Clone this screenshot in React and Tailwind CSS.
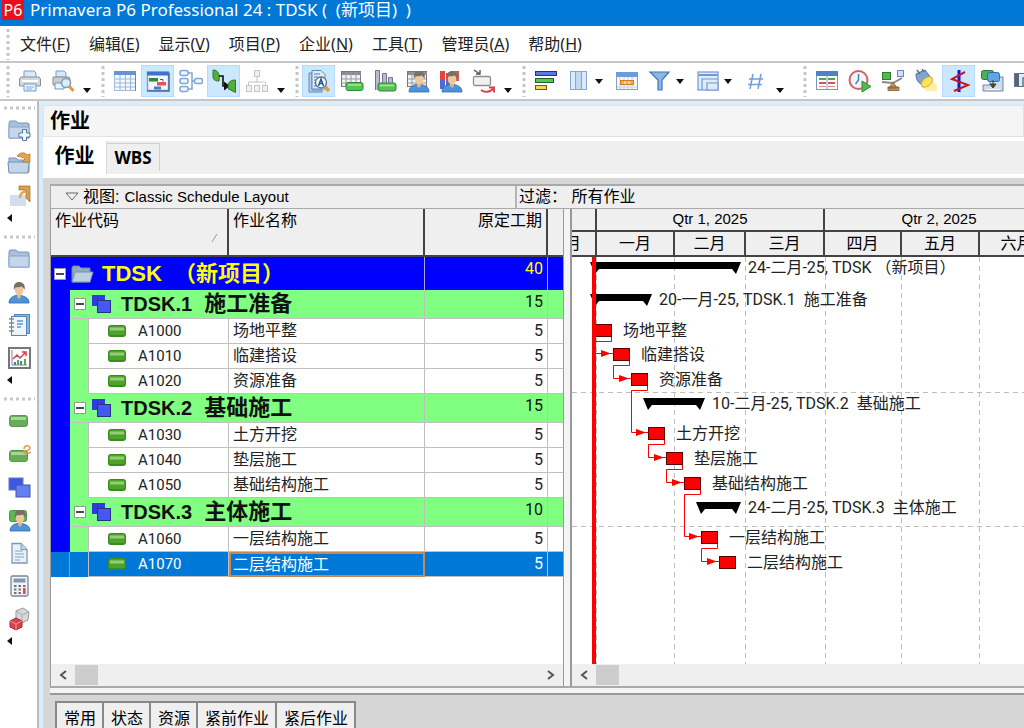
import React, { useState } from 'react';

const MENUS = [
  ['文件', 'F'],
  ['编辑', 'E'],
  ['显示', 'V'],
  ['项目', 'P'],
  ['企业', 'N'],
  ['工具', 'T'],
  ['管理员', 'A'],
  ['帮助', 'H']
];

const WBS_ROWS = [
  {
    code: 'TDSK.1',
    name: '施工准备',
    duration: 15,
    activities: [
      { id: 'A1000', name: '场地平整', duration: 5 },
      { id: 'A1010', name: '临建搭设', duration: 5 },
      { id: 'A1020', name: '资源准备', duration: 5 }
    ]
  },
  {
    code: 'TDSK.2',
    name: '基础施工',
    duration: 15,
    activities: [
      { id: 'A1030', name: '土方开挖', duration: 5 },
      { id: 'A1040', name: '垫层施工', duration: 5 },
      { id: 'A1050', name: '基础结构施工', duration: 5 }
    ]
  },
  {
    code: 'TDSK.3',
    name: '主体施工',
    duration: 10,
    activities: [
      { id: 'A1060', name: '一层结构施工', duration: 5 },
      { id: 'A1070', name: '二层结构施工', duration: 5 }
    ]
  }
];

// Gantt coordinates are measured from the top left of the chart canvas
const SUMMARY_BARS = [
  { x: 18, end: 169, y: 5, label: '24-二月-25, TDSK （新项目）' },
  { x: 18, end: 80, y: 37, label: '20-一月-25, TDSK.1  施工准备' },
  { x: 71, end: 133, y: 141, label: '10-二月-25, TDSK.2  基础施工' },
  { x: 124, end: 169, y: 245, label: '24-二月-25, TDSK.3  主体施工' }
];

const TASK_BARS = [
  { x: 23, y: 67, label: '场地平整' },
  { x: 41, y: 91, label: '临建搭设' },
  { x: 59, y: 116, label: '资源准备' },
  { x: 76, y: 170, label: '土方开挖' },
  { x: 94, y: 195, label: '垫层施工' },
  { x: 112, y: 220, label: '基础结构施工' },
  { x: 129, y: 274, label: '一层结构施工' },
  { x: 147, y: 299, label: '二层结构施工' }
];

const GRID_X = [24, 102, 173, 253, 329, 407, 485];

/* ---------- icons ---------- */

const Icon = ({ children, className = 'h-6 w-6' }) => (
  <svg viewBox="0 0 24 24" className={className} aria-hidden="true">{children}</svg>
);

const Printer = () => (
  <>
    <path d="M6 2h10l2 2v5H6z" fill="#d7e8f8" stroke="#7a9cc4" />
    <path d="M3 8h18l1.500 2v7h-21v-7z" fill="#d5d7da" stroke="#8b9096" />
    <path d="M4 12h16" stroke="#fff" strokeWidth="2" />
    <path d="M6 15h12v7H6z" fill="#eaf4fd" stroke="#6d9bc8" />
    <path d="M8 18h8M8 20h6" stroke="#7fb0dc" />
  </>
);
const PrintPreview = () => (
  <>
    <path d="M5 2h8l2 2v4H5z" fill="#d7e8f8" stroke="#7a9cc4" />
    <path d="M2 8h16l1 2v6H2z" fill="#c9ccd0" stroke="#8b9096" />
    <path d="M4 14h9v6H4z" fill="#eaf4fd" stroke="#6d9bc8" />
    <path d="M18.500 17.500l4 4.500" stroke="#dc9c4a" strokeWidth="3" />
    <circle cx="15" cy="14" r="4.500" fill="#d9edfb" stroke="#8d99a8" strokeWidth="1.500" />
  </>
);
const GridTable = () => (
  <>
    <rect x="1.500" y="2.500" width="21" height="19" fill="#f4f9fe" stroke="#a5bddb" />
    <rect x="1" y="2" width="22" height="4" fill="#6a93d4" />
    <path d="M2 10h20M2 14h20M2 18h20M7 6v15M12.500 6v15M17.500 6v15" stroke="#9eb6d6" />
    <path d="M22.500 4v18" stroke="#6b87b0" />
  </>
);
const GanttIcon = () => (
  <>
    <rect x="1.500" y="3.500" width="21" height="18" fill="#f2f7fd" stroke="#7f9fcd" strokeWidth="1.500" />
    <path d="M1 22h22V4" fill="none" stroke="#4a6d9c" strokeWidth="1.500" />
    <rect x="1" y="2.500" width="22" height="4" fill="#3f74c8" />
    <rect x="3" y="9" width="9" height="3.500" fill="#2f8a35" />
    <rect x="11" y="13" width="9" height="3.500" fill="#e85252" />
    <rect x="8" y="17.500" width="7" height="3" fill="#5272dc" />
    <path d="M14 10.500h3v2" fill="none" stroke="#555" />
  </>
);
const Network = () => (
  <g fill="#eff6fd" stroke="#7ea6d6" strokeWidth="1.500">
    <path d="M9 4h4v16H9M13 12h3" fill="none" />
    <rect x="1" y="1.500" width="8" height="5" rx="2" />
    <rect x="1" y="9.500" width="8" height="5" rx="2" />
    <rect x="1" y="17.500" width="8" height="5" rx="2" />
    <rect x="15.500" y="9.500" width="8" height="5" rx="2" />
  </g>
);
const Trace = () => (
  <>
    <path d="M1 1c5 0 7 4 6 11-3 0-6-1-6-4z" fill="#55ad3d" stroke="#2c7a22" />
    <path d="M7 7h4v10h5" fill="none" stroke="#111" strokeWidth="1.600" />
    <path d="M12 12.500l6 4.500-6 4.500z" fill="#111" />
    <path d="M23.500 11c-7 0-8 4-7 9l7 3.500z" fill="#55ad3d" stroke="#2c7a22" />
  </>
);
const OrgChart = () => (
  <g fill="#f0f0f0" stroke="#c5c5c5">
    <path d="M12 8v6M3.500 16v-3h17v3" fill="none" />
    <rect x="9.500" y="1.500" width="5" height="6" />
    <rect x="1.500" y="16.500" width="5" height="6" />
    <rect x="9.500" y="16.500" width="5" height="6" />
    <rect x="17.500" y="16.500" width="5" height="6" />
  </g>
);
const FindDoc = () => (
  <>
    <path d="M2 4h3v17h10v2H2z" fill="#b7d0ea" stroke="#5f88b8" />
    <path d="M5 1.500h9l4 4V20H5z" fill="#dcebf9" stroke="#5f88b8" />
    <path d="M7 5h6M7 8h4M7 11h2M7 14h2M7 17h3" stroke="#4f7fba" />
    <path d="M18.500 18l3.500 4" stroke="#dfa048" strokeWidth="3.500" />
    <circle cx="14" cy="13.500" r="5.500" fill="#f4faff" stroke="#66707c" strokeWidth="1.300" />
    <path d="M11.500 17l2.500-7 2.500 7M12.300 14.500h3.400" fill="none" stroke="#23568f" strokeWidth="1.500" />
  </>
);
const TableBar = () => (
  <>
    <rect x="1.500" y="2.500" width="19" height="15" fill="#f1f1f4" stroke="#77777f" />
    <path d="M2 3h19v3H2z" fill="#8d8d99" />
    <path d="M2 10h18M2 14h18M6 3v15M11 3v15M16 3v15" stroke="#9a9aa4" />
    <rect x="6" y="13.500" width="17" height="8" rx="2" fill="#59c257" stroke="#2c8a33" />
    <path d="M8 16h13" stroke="#a5eb9c" strokeWidth="1.500" />
  </>
);
const HistogramBar = () => (
  <>
    <path d="M2.500 21V1.500h4V21M9.500 18V4.500h4V18M15.500 15V8.500h4V15" fill="#b8bbd8" stroke="#73758e" />
    <rect x="5" y="14" width="18" height="8" rx="2" fill="#59c257" stroke="#2c8a33" />
    <path d="M7 16.500h14" stroke="#a5eb9c" strokeWidth="1.500" />
  </>
);
const Person = () => (
  <>
    <path d="M3 23c0-5 4-7 7-7.500h5c5 1 8 3 8 7.500z" fill="#4c93d9" stroke="#2f6cab" strokeWidth=".8" />
    <path d="M11 14h4v3l-2 2-2-2z" fill="#e2b184" />
    <ellipse cx="13" cy="10" rx="4.200" ry="5.500" fill="#edc79e" />
    <path d="M8 10c-1-6 2-8 5-8s7 2 5.500 8c-1-2-2-3-3-3.500-2 1-5 .5-6 1z" fill="#77706a" />
  </>
);
const TablePerson = () => (
  <>
    <rect x="1.500" y="2.500" width="19" height="15" fill="#f1f1f4" stroke="#77777f" />
    <path d="M2 3h19v3H2z" fill="#8d8d99" />
    <path d="M2 10h18M2 14h18M6 3v15M11 3v15" stroke="#9a9aa4" />
    <Person />
  </>
);
const BarsPerson = () => (
  <>
    <path d="M1 2h5v9H1zM7 4h4v8H7z" fill="#e34545" />
    <path d="M1 11h5v9H1zM7 12h4v6H7z" fill="#4e6ad8" />
    <path d="M14 2h6v10h-6z" fill="#d95858" />
    <Person />
  </>
);
const TraceBox = () => (
  <>
    <path d="M2 1l6 4M8 1v4H4" fill="none" stroke="#555" strokeWidth="1.400" />
    <rect x="1.500" y="7.500" width="17" height="9" rx="1.500" fill="#f2f2f2" stroke="#8f8f8f" strokeWidth="1.300" />
    <path d="M9 21c4 3 9 2 12-1M17 18.500h5v5" fill="none" stroke="#dc3945" strokeWidth="1.800" />
  </>
);
const Bars = () => (
  <g strokeWidth="1">
    <rect x="1.500" y="2.500" width="21" height="4" fill="#5a79e6" stroke="#29356e" />
    <rect x="1.500" y="9.500" width="18" height="4" fill="#54c65a" stroke="#1e6427" />
    <rect x="1.500" y="16.500" width="11" height="4" fill="#f0da5d" stroke="#6b5b1b" />
  </g>
);
const Columns = () => (
  <g fill="#dbe9f8" stroke="#83a7d6">
    <rect x="3.500" y="2.500" width="5" height="18" />
    <rect x="8.500" y="2.500" width="6" height="18" fill="#c3d9f1" />
    <rect x="14.500" y="2.500" width="5" height="18" />
  </g>
);
const Timescale = () => (
  <>
    <rect x="1.500" y="3.500" width="21" height="17" fill="#f4f7fb" stroke="#8aa0c0" />
    <rect x="1" y="3" width="22" height="5" fill="#6f9ae0" />
    <path d="M5 8v12M9 8v12M13 8v12M17 8v12M2 18h20" stroke="#c6d2e3" />
    <rect x="5.500" y="11.500" width="13" height="4" fill="#f2ac4c" stroke="#cd7d22" />
    <path d="M10 12v3M14 12v3" stroke="#fff" />
  </>
);
const Funnel = () => (
  <path d="M2 3h19l-7 8v10h-4V11z" fill="#8db7e2" stroke="#3f77b5" strokeWidth="1.200" />
);
const GroupBy = () => (
  <g fill="#dfebf9" stroke="#6f9ad2" strokeWidth="1.200">
    <rect x="2" y="3" width="20" height="18" />
    <path d="M2.500 6h19" strokeWidth="2" />
    <path d="M6 21V10h16M11 21v-7h11v7z" />
  </g>
);
const Hash = () => (
  <path d="M9 5L6 20M17 5l-3 15M5 10h14M4 15.500h14" stroke="#6d9ede" strokeWidth="1.500" fill="none" />
);
const Sheet = () => (
  <>
    <rect x="1.500" y="2.500" width="21" height="18" fill="#fafcff" stroke="#7c97c0" />
    <rect x="1" y="2" width="22" height="5" fill="#547fc6" />
    <path d="M4 10h7M13 10h7" stroke="#4aa84b" strokeWidth="2" />
    <path d="M4 14h7M13 14h7" stroke="#e25454" strokeWidth="2" />
    <path d="M4 17.500h7M13 17.500h7" stroke="#dd8888" />
    <path d="M12 7v13" stroke="#8aa2c6" />
  </>
);
const ClockRun = () => (
  <>
    <circle cx="10.500" cy="11" r="9" fill="#eef5fc" stroke="#d36161" strokeWidth="2" />
    <path d="M10.500 5v6l-3 4" fill="none" stroke="#5480b0" strokeWidth="1.500" />
    <path d="M14 12l9 5.500-9 5.500z" fill="#52bd4c" stroke="#2f8a33" />
  </>
);
const Balance = () => (
  <>
    <rect x="1.500" y="3.500" width="8" height="7" fill="#54b84d" stroke="#2c7d2f" />
    <rect x="16.500" y="1.500" width="6" height="6" fill="#cde2f7" stroke="#5c8cc5" />
    <path d="M1 13l11 1 9-5" stroke="#888" fill="none" strokeWidth="1.800" />
    <path d="M12 13l4 6H8zM7 18h11v3.500H7z" fill="#c2935a" stroke="#7c5930" strokeWidth=".8" />
  </>
);
const Spotlight = () => (
  <>
    <path d="M16 9l7 7v6l-10 .5-6-5z" fill="#fdf2a4" />
    <path d="M2 5l9-4 6 8-7 7c-6-1-8-6-8-11z" fill="#86a4cd" stroke="#50709e" />
    <path d="M3 1l3 4M8 0l2 3" stroke="#50709e" strokeWidth="1.500" />
    <ellipse cx="13" cy="13" rx="6.500" ry="4" transform="rotate(-40 13 13)" fill="#fbe557" stroke="#c9b14e" />
  </>
);
const ProgressLine = () => (
  <>
    <path d="M12 1v22" stroke="#1414dc" strokeWidth="3" />
    <path d="M18 3L5 10l16 6-14 6" fill="none" stroke="#c41822" strokeWidth="2" />
  </>
);
const Messages = () => (
  <>
    <path d="M10 8h13v14H3v-6h7z" fill="#d0dceb" stroke="#6b86a8" />
    <rect x="1.500" y="1.500" width="12" height="9" rx="2" fill="#4faf58" stroke="#2b7a3a" />
    <rect x="7.500" y="3.500" width="12" height="9" rx="2" fill="#5fa5df" stroke="#2f6da5" />
    <path d="M13 11v6M10 15l3 4 3-4z" stroke="#4c3e30" fill="#4c3e30" />
    <path d="M6 20.500h14" stroke="#fff" />
  </>
);
const Panels = () => (
  <>
    <rect x="1.500" y="4.500" width="20" height="13" fill="#dfeaf7" stroke="#62748c" />
    <path d="M2 5h4v12H2z" fill="#5a6577" />
    <path d="M10 17V9h11" fill="none" stroke="#62748c" strokeWidth="1.500" />
  </>
);

const Folder = () => (
  <>
    <path d="M2 20V5l1-2h6l2 2h10l1 1v14z" fill="#a9c1dc" stroke="#7492b6" />
    <path d="M2 20V9h20v11z" fill="#c3d6ec" stroke="#89a5c7" />
  </>
);
const FolderAdd = () => (
  <>
    <Folder />
    <path d="M15.500 11.500h4v3.500h3.500v4h-3.500v3.500h-4V19H12v-4h3.500z" fill="#f4f8fc" stroke="#54779f" />
  </>
);
const FolderOpen = () => (
  <>
    <path d="M2 21V7h7l2 2h11v12z" fill="#a9c1dc" stroke="#7492b6" />
    <path d="M1 11h21l-1 11H2z" fill="#c3d6ec" stroke="#7492b6" />
    <path d="M10 5c3-4 8-4 10-1l3-1v8h-8l3-3c-2-2-5-2-8-3z" fill="#e6a548" stroke="#a9712a" strokeWidth=".7" />
  </>
);
const FolderExit = () => (
  <>
    <path d="M3 22V11h16v11z" fill="#cfdff0" />
    <path d="M12 2h11v16l-4-4V6h-7z" fill="#dca04b" stroke="#9f6c2b" strokeWidth=".7" />
    <path d="M13 14c0-4 2-6 6-7" stroke="#e6a548" strokeWidth="2.500" fill="none" />
  </>
);
const PersonBig = () => (
  <g transform="translate(-1 0)"><Person /></g>
);
const Notebook = () => (
  <>
    <rect x="7.500" y="1.500" width="15" height="19" fill="#8ab3de" stroke="#5684b8" />
    <rect x="4.500" y="3.500" width="15" height="19" fill="#eef5fc" stroke="#5684b8" />
    <path d="M2 6h5M2 10h5M2 14h5M2 18h5" stroke="#888" strokeWidth="1.500" />
    <path d="M10 8h6M10 11h6M10 14h4" stroke="#5e96d1" strokeWidth="1.500" />
  </>
);
const ReportChart = () => (
  <>
    <rect x="2" y="2" width="21" height="20" fill="#fff" stroke="#77777a" strokeWidth="2" />
    <path d="M5 4v15h15" stroke="#888" fill="none" />
    <path d="M7 19v-3h2v3zM13 19v-4h2v4z" fill="#4d74d6" />
    <path d="M10 19v-5h2v5zM17 19v-6h2v6z" fill="#4fae4c" />
    <path d="M6 13l4-4 3 3 6-6M15 6h4v4" fill="none" stroke="#de3d50" strokeWidth="1.500" />
  </>
);
const GreenBar = () => (
  <>
    <rect x="2.500" y="6.500" width="18" height="11" rx="2.500" fill="#67ad57" stroke="#5a9a4e" />
    <path d="M4 9.500h15" stroke="#a5d698" strokeWidth="3" />
  </>
);
const GreenBarLink = () => (
  <>
    <rect x="2.500" y="8.500" width="18" height="11" rx="2.500" fill="#67ad57" stroke="#5a9a4e" />
    <path d="M4 11.500h15" stroke="#a5d698" strokeWidth="3" />
    <path d="M17 7c0-4 6-4 6-1 0 4-6 1-6 4 0 2 4 2 7 0" fill="none" stroke="#e09a48" strokeWidth="1.500" />
  </>
);
const Squares = () => (
  <>
    <rect x="2" y="3" width="14" height="12" fill="#3f57dc" stroke="#6378c8" />
    <rect x="9" y="10" width="14" height="12" fill="#6580f0" stroke="#4454a4" />
  </>
);
const RolePerson = () => (
  <>
    <rect x="2.500" y="2.500" width="17" height="11" rx="2" fill="#5fb553" stroke="#4a9640" />
    <Person />
  </>
);
const Document = () => (
  <>
    <path d="M5 2.500h9l6 6V22H5z" fill="#e8f0f8" stroke="#7f98b8" strokeWidth="1.300" />
    <path d="M14 2.500v6h6" fill="#c3d4e8" stroke="#7f98b8" />
    <path d="M8 10h8M8 13h9M8 16h9M8 19h5" stroke="#82a6cf" />
  </>
);
const Calculator = () => (
  <>
    <rect x="4" y="2" width="17" height="20" rx="1.500" fill="#f3f3f5" stroke="#7c8594" strokeWidth="1.300" />
    <rect x="6.500" y="4.500" width="12" height="4" fill="#7e97b5" />
    <path d="M7 12h2.500M11.500 12H14M7 15.500h2.500M11.500 15.500H14M7 19h2.500M11.500 19H14M16 12h2.500" stroke="#6b7480" strokeWidth="2" />
    <path d="M17.300 14v6" stroke="#e04444" strokeWidth="2.500" />
  </>
);
const Dice = () => (
  <>
    <path d="M9 4l7-3 6 4-1 8-6 3-6-4z" fill="#d8d8d8" stroke="#999" />
    <path d="M9 4l6 4 7-3M15 8v8" stroke="#aaa" fill="none" />
    <path d="M3 14l6-3 6 3v6l-6 3-6-3z" fill="#d8424e" stroke="#a62732" />
    <path d="M3 14l6 3 6-3M9 17v6" stroke="#f2939b" fill="none" />
  </>
);

/* ---------- toolbars ---------- */

const TOOL_GROUPS = [
  [
    { icon: Printer, label: '打印' },
    { icon: PrintPreview, label: '打印预览' },
    { caret: 'low' }
  ],
  [
    { icon: GridTable, label: '表格' },
    { icon: GanttIcon, label: '横道图', active: true },
    { icon: Network, label: '网络图' },
    { icon: Trace, label: '逻辑跟踪', active: true },
    { icon: OrgChart, label: '组织图' },
    { caret: 'low' }
  ],
  [
    { icon: FindDoc, label: '详情', active: true },
    { icon: TableBar, label: '作业表格' },
    { icon: HistogramBar, label: '作业直方图' },
    { icon: TablePerson, label: '资源表格' },
    { icon: BarsPerson, label: '资源直方图' },
    { icon: TraceBox, label: '跟踪' },
    { caret: 'low' }
  ],
  [
    { icon: Bars, label: '横道' },
    { icon: Columns, label: '栏位' },
    { caret: 'mid' },
    { icon: Timescale, label: '时间标尺' },
    { icon: Funnel, label: '过滤器' },
    { caret: 'mid' },
    { icon: GroupBy, label: '分组和排序' },
    { caret: 'mid' },
    { icon: Hash, label: '编号' },
    { caret: 'low', wide: true }
  ],
  [
    { icon: Sheet, label: '电子表格' },
    { icon: ClockRun, label: '进度计算' },
    { icon: Balance, label: '资源平衡' },
    { icon: Spotlight, label: '进度聚光灯' },
    { icon: ProgressLine, label: '进度线', active: true },
    { icon: Messages, label: '提交' },
    { icon: Panels, label: '面板' }
  ]
];

const SIDE_GROUPS = [
  [[FolderAdd, '新建'], [FolderOpen, '打开'], [FolderExit, '关闭']],
  [[Folder, '项目'], [PersonBig, '资源'], [Notebook, '记事本'], [ReportChart, '报表']],
  [[GreenBar, '作业'], [GreenBarLink, '步骤'], [Squares, 'WBS'], [RolePerson, '分配'], [Document, '文档'], [Calculator, '费用'], [Dice, '风险']]
];

const Grip = () => (
  <svg viewBox="0 0 4 32" className="h-8 w-1 shrink-0" aria-hidden="true">
    <path d="M2 1v31" stroke="#c6c6c6" strokeWidth="3" strokeDasharray="3 3" />
  </svg>
);

const ToolCaret = ({ low, wide }) => (
  <button
    type="button"
    aria-label="更多"
    className={`flex h-8 shrink-0 justify-start ${wide ? 'w-6' : 'w-[15px]'} ${low ? 'items-end pb-1 pl-1' : 'items-center'}`}
  >
    <svg viewBox="0 0 8 5" className="h-[5px] w-2"><path d="M0 0h8L4 5z" fill="#111" /></svg>
  </button>
);

const Toolbar = () => (
  <div className="flex h-[38px] shrink-0 items-center overflow-hidden border-b-2 border-[#c6c6c6] bg-white pl-[6px]">
    {TOOL_GROUPS.map((group, i) => (
      <div key={i} className="flex shrink-0 items-center pr-[7px]">
        <Grip />
        <div className="flex pl-[3px]">
          {group.map((tool, j) =>
            tool.caret ? (
              <ToolCaret key={j} low={tool.caret === 'low'} wide={tool.wide} />
            ) : (
              <button
                key={j}
                type="button"
                title={tool.label}
                aria-label={tool.label}
                className={`flex h-8 w-[33px] items-center justify-center border ${tool.active ? 'border-[#b4dbfb] bg-[#cce8ff]' : 'border-transparent'}`}
              >
                <Icon className="h-6 w-6"><tool.icon /></Icon>
              </button>
            )
          )}
        </div>
      </div>
    ))}
  </div>
);

const SideBar = () => (
  <aside className="flex w-[39px] shrink-0 flex-col overflow-hidden border-r-2 border-[#b9bdc1] bg-white pt-[5px]">
    {SIDE_GROUPS.map((group, i) => (
      <div key={i} className="flex shrink-0 flex-col pb-[11px]">
        <svg viewBox="0 0 32 4" className="mb-[3px] ml-1 h-1 w-8" aria-hidden="true">
          <path d="M0 2h31" stroke="#c8c8c8" strokeWidth="3" strokeDasharray="3 3" />
        </svg>
        {group.map(([Glyph, label]) => (
          <button key={label} type="button" title={label} aria-label={label} className="flex h-[33px] items-center justify-center">
            <Icon className="h-6 w-6"><Glyph /></Icon>
          </button>
        ))}
        <button type="button" aria-label="展开" className="flex h-3 items-center pl-[7px]">
          <svg viewBox="0 0 5 8" className="h-2 w-[5px]"><path d="M5 0v8L0 4z" fill="#111" /></svg>
        </button>
      </div>
    ))}
  </aside>
);

/* ---------- activity table ---------- */

const Expander = ({ open, onClick, label }) => (
  <button
    type="button"
    aria-label={label}
    onClick={onClick}
    className="flex h-3 w-3 shrink-0 items-center justify-center border border-[#9a9a9a] bg-white"
  >
    <svg viewBox="0 0 8 8" className="h-2 w-2">
      <path d={open ? 'M0 4h8' : 'M0 4h8M4 0v8'} stroke="#111" strokeWidth="1.500" />
    </svg>
  </button>
);

const ActivityPill = () => (
  <svg viewBox="0 0 18 12" className="h-3 w-[18px] shrink-0" aria-hidden="true">
    <rect x="0" y="0" width="18" height="12" rx="3" fill="#3a8c1d" />
    <rect x="1" y="1" width="16" height="9" rx="2" fill="#4fa32c" />
    <path d="M2 4h14" stroke="#93cf76" strokeWidth="3" />
  </svg>
);

const ActivityTable = () => {
  const [closed, setClosed] = useState([]);
  const [selected, setSelected] = useState('A1070');

  const toggle = (code) => {
    setClosed((prev) => (prev.includes(code) ? prev.filter((c) => c !== code) : [...prev, code]));
  };

  return (
    <table className="w-full table-fixed border-separate border-spacing-0">
      <colgroup>
        <col className="w-[19px]" />
        <col className="w-[19px]" />
        <col className="w-[140px]" />
        <col className="w-[196px]" />
        <col className="w-[123px]" />
        <col />
      </colgroup>
      <thead>
        <tr className="h-12 bg-[#efefef] text-left align-top text-base leading-6">
          <th colSpan={3} className="border-r-2 border-b-2 border-[#444] pr-2 pl-1 font-normal">
            作业代码
            <svg viewBox="0 0 8 10" className="ml-auto h-[10px] w-2" aria-hidden="true"><path d="M1 9l5-8" stroke="#999" /></svg>
          </th>
          <th className="border-r-2 border-b-2 border-[#444] pl-1 font-normal">作业名称</th>
          <th className="border-r-2 border-b-2 border-[#444] pr-1 text-right font-normal">原定工期</th>
          <th className="border-b-2 border-[#444]" aria-label="空" />
        </tr>
      </thead>
      <tbody>
        <tr className="h-[33px] bg-[#0000ff] text-[#ffff00]">
          <td colSpan={4} className="border-r border-[#a8a8d8] pl-[3px]">
            <div className="flex items-center">
              <Expander open={!closed.includes('TDSK')} onClick={() => toggle('TDSK')} label="TDSK" />
              <svg viewBox="0 0 24 20" className="ml-1 h-5 w-6" aria-hidden="true">
                <path d="M2 18V4l1-2h6l2 2h9v14z" fill="#8fa9c2" stroke="#6d88a3" />
                <path d="M2 18L5 8h18l-3 10z" fill="#bdd0e2" stroke="#7590ab" />
              </svg>
              <span className="ml-2 text-[22px] leading-6 font-bold whitespace-pre">TDSK  （新项目）</span>
            </div>
          </td>
          <td className="border-r border-[#a8a8d8] pr-1 text-right align-top font-['Roboto'] text-base">40</td>
          <td />
        </tr>
        {!closed.includes('TDSK') && WBS_ROWS.map((wbs) => (
          <React.Fragment key={wbs.code}>
            <tr className="h-[29px] bg-[#80ff80] text-[#111]">
              <td className="bg-[#0000ff]" />
              <td colSpan={3} className="border-r border-b border-[#c0c0c0] pl-1">
                <div className="flex items-center">
                  <Expander open={!closed.includes(wbs.code)} onClick={() => toggle(wbs.code)} label={wbs.code} />
                  <svg viewBox="0 0 20 18" className="ml-[6px] h-[18px] w-5" aria-hidden="true">
                    <rect x="0" y="0" width="13" height="11" fill="#2c3ee0" />
                    <rect x="5.500" y="5.500" width="13" height="12" fill="#4458f4" stroke="#2a3080" />
                  </svg>
                  <span className="ml-[9px] flex items-center gap-3 text-xl leading-6 font-bold">
                    <span>{wbs.code}</span>
                    <span className="text-[22px] leading-6">{wbs.name}</span>
                  </span>
                </div>
              </td>
              <td className="border-r border-b border-[#c0c0c0] pr-1 text-right align-top font-['Roboto'] text-base">{wbs.duration}</td>
              <td className="border-b border-[#c0c0c0]" />
            </tr>
            {!closed.includes(wbs.code) && wbs.activities.map((act) => {
              const isSelected = act.id === selected;
              return (
                <tr
                  key={act.id}
                  onClick={() => setSelected(act.id)}
                  className={`h-[25px] text-base leading-[22px] ${isSelected ? 'bg-[#0078d7] text-white' : 'bg-white text-[#222]'}`}
                >
                  <td className={isSelected ? 'border-r border-[#5ea9e2]' : 'bg-[#0000ff]'} />
                  <td className={`border-r border-[#c0c0c0] ${isSelected ? '' : 'bg-[#80ff80]'}`} />
                  <td className="border-r border-b border-[#c0c0c0] pl-[19px]">
                    <div className="flex items-center gap-3">
                      <ActivityPill />
                      <span className="font-['Roboto'] text-[15px]">{act.id}</span>
                    </div>
                  </td>
                  <td className={isSelected ? 'border-2 border-[#c88850] pl-[2px]' : 'border-r border-b border-[#c0c0c0] pl-1'}>
                    <div className="leading-5">{act.name}</div>
                  </td>
                  <td className="border-r border-b border-[#c0c0c0] pr-1 text-right font-['Roboto']">{act.duration}</td>
                  <td className="border-b border-[#c0c0c0]" />
                </tr>
              );
            })}
          </React.Fragment>
        ))}
      </tbody>
    </table>
  );
};

/* ---------- gantt ---------- */

const MONTH_CLASS = 'flex h-6 shrink-0 items-center justify-center border-r-2 border-[#444] text-base';

const GanttHeader = () => (
  <div className="h-12 shrink-0 overflow-hidden border-b-2 border-[#444] bg-[#efefef]">
    <div className="flex h-[23px] border-b-2 border-[#444] font-['Liberation_Sans'] text-[15px]">
      <div className="w-[25px] shrink-0 border-r-2 border-[#444]" />
      <div className="flex w-[228px] shrink-0 items-center justify-center border-r-2 border-[#444]">Qtr 1, 2025</div>
      <div className="flex w-[230px] shrink-0 items-center justify-center border-r-2 border-[#444]">Qtr 2, 2025</div>
    </div>
    <div className="flex">
      <div className="flex h-6 w-[25px] shrink-0 items-center justify-end overflow-hidden border-r-2 border-[#444] pr-[14px] text-base">
        <span className="whitespace-nowrap">十二月</span>
      </div>
      <div className={`${MONTH_CLASS} w-[78px]`}>一月</div>
      <div className={`${MONTH_CLASS} w-[71px]`}>二月</div>
      <div className={`${MONTH_CLASS} w-[79px]`}>三月</div>
      <div className={`${MONTH_CLASS} w-[77px]`}>四月</div>
      <div className={`${MONTH_CLASS} w-[78px]`}>五月</div>
      <div className={`${MONTH_CLASS} w-[75px]`}>六月</div>
    </div>
  </div>
);

const GanttChart = () => (
  <svg
    className="block min-h-0 w-full flex-1 bg-white font-['Roboto','Noto_Sans_CJK_SC',sans-serif]"
    role="img"
    aria-label="横道图"
  >
    <g stroke="#bdbdbd" strokeDasharray="5 4">
      {GRID_X.map((x) => (
        <line key={x} x1={x + 0.5} x2={x + 0.5} y1="0" y2="100%" />
      ))}
      <line x1="0" x2="100%" y1="135.500" y2="135.500" />
      <line x1="0" x2="100%" y1="269.500" y2="269.500" />
    </g>

    {SUMMARY_BARS.map((bar) => (
      <g key={bar.y}>
        <path
          d={`M${bar.x} ${bar.y}H${bar.end}L${bar.end - 5} ${bar.y + 12}L${bar.end - 9} ${bar.y + 7}H${bar.x + 9}L${bar.x + 5} ${bar.y + 12}Z`}
          fill="#000"
        />
        <text x={bar.end + 7} y={bar.y + 11} fontSize="16" fill="#222" className="whitespace-pre">{bar.label}</text>
      </g>
    ))}

    {TASK_BARS.slice(0, -1).map((bar, i) => {
      const next = TASK_BARS[i + 1];
      const mid = next.y + 5;
      return (
        <g key={bar.y}>
          <path
            d={`M${bar.x + 16.5} ${bar.y + 12}V${bar.y + 17.5}H${bar.x + 0.5}V${mid + 0.5}H${next.x}`}
            fill="none"
            stroke="#f00"
          />
          <path d={`M${next.x - 12} ${mid - 3}L${next.x - 2} ${mid + 0.5}L${next.x - 12} ${mid + 4}Z`} fill="#f00" />
        </g>
      );
    })}

    {TASK_BARS.map((bar) => (
      <g key={bar.y}>
        <rect x={bar.x + 0.5} y={bar.y + 0.5} width="16" height="12" fill="#f00" stroke="#5a0000" />
        <text x={bar.x + 28} y={bar.y + 12} fontSize="16" fill="#222">{bar.label}</text>
      </g>
    ))}

    <rect x="20" y="0" width="4" height="100%" fill="#f00" />
  </svg>
);

const ScrollBar = ({ end }) => (
  <div className="flex h-[22px] shrink-0 items-center bg-[#efefef] text-[#555]">
    <button type="button" aria-label="向左滚动" className="flex w-6 justify-center">
      <svg viewBox="0 0 8 10" className="h-[10px] w-2"><path d="M7 1L2 5l5 4" fill="none" stroke="currentColor" strokeWidth="2" /></svg>
    </button>
    <div className="h-5 w-[23px] bg-[#cdcdcd]" />
    {end && (
      <button type="button" aria-label="向右滚动" className="ml-auto flex w-6 justify-center">
        <svg viewBox="0 0 8 10" className="h-[10px] w-2"><path d="M1 1l5 4-5 4" fill="none" stroke="currentColor" strokeWidth="2" /></svg>
      </button>
    )}
  </div>
);

const DETAIL_TABS = ['常用', '状态', '资源', '紧前作业', '紧后作业'];

const App = () => {
  return (
    <div className="flex h-screen flex-col overflow-hidden bg-white font-['Liberation_Sans','Noto_Sans_CJK_SC',sans-serif] text-black">
      <header className="flex h-[26px] shrink-0 items-start bg-[#0078d7] pl-[2px] text-white">
        <div className="flex h-5 w-[22px] items-center justify-center bg-[#e8101c] font-['Noto_Sans'] text-base leading-5">P6</div>
        <h1 className="pl-[6px] font-['Noto_Sans','Noto_Sans_CJK_SC',sans-serif] text-[17px] leading-5 whitespace-pre">
          Primavera P6 Professional 24 : TDSK (  (新项目)  )
        </h1>
      </header>

      <nav className="flex h-[37px] shrink-0 items-center border-b-2 border-[#c6c6c6] pl-[6px] font-['Noto_Sans','Noto_Sans_CJK_SC',sans-serif] text-base text-[#222]">
        <Grip />
        <div className="flex gap-[19px] pl-[10px]">
          {MENUS.map(([label, key]) => (
            <button key={key} type="button" className="leading-6">
              {label}(<span className="underline">{key}</span>)
            </button>
          ))}
        </div>
      </nav>

      <Toolbar />

      <div className="flex min-h-0 flex-1">
        <SideBar />
        <main className="flex min-w-0 flex-1 flex-col border-t-4 border-l-4 border-[#dbecfa]">
          <h2 className="flex h-8 shrink-0 items-center border border-[#e2e2e2] bg-[#f5f5f5] pl-[6px] text-xl font-bold">作业</h2>
          <div className="mt-1 flex h-[37px] shrink-0 items-start border-b-4 border-white bg-[#efefef]">
            <button type="button" className="h-[33px] w-16 border-r border-[#d8d8d8] bg-white pb-1 text-xl leading-7 font-bold">作业</button>
            <button type="button" className="mt-[2px] h-7 w-[53px] border-t border-r border-[#d0d0d0] font-['Open_Sans'] text-[17px] leading-7 font-bold">WBS</button>
          </div>

          <div className="flex min-h-0 flex-1 flex-col bg-[#d6d6d6] pt-[6px] pl-[7px]">
            <div className="flex h-[25px] shrink-0 items-center border-t-2 border-b border-l border-[#a9a9a9] bg-[#efefef] text-base">
              <div className="flex h-full w-[466px] shrink-0 items-center border-r-2 border-[#b5b5b5] pl-[14px]">
                <svg viewBox="0 0 14 10" className="h-[10px] w-[14px]" aria-hidden="true"><path d="M1 1h12L7 8z" fill="none" stroke="#666" /></svg>
                <span className="pl-1">视图:</span>
                <span className="pl-[5px] text-[15px]">Classic Schedule Layout</span>
              </div>
              <div className="pl-[2px] whitespace-pre">过滤： 所有作业</div>
            </div>

            <div className="flex min-h-0 flex-1">
              <section className="flex w-[514px] shrink-0 flex-col border-r border-l border-[#999] bg-white">
                <div className="min-h-0 flex-1 overflow-hidden">
                  <ActivityTable />
                </div>
                <ScrollBar end />
              </section>
              <div className="w-[6px] shrink-0 bg-[#f4f4f4]" />
              <section className="flex min-w-0 flex-1 flex-col border-l-2 border-[#999]">
                <GanttHeader />
                <GanttChart />
                <ScrollBar />
              </section>
            </div>

            <div className="h-[9px] shrink-0 border-t-2 border-b-2 border-t-[#a9a9a9] border-b-[#999] bg-[#f4f4f4]" />
            <div className="flex h-[33px] shrink-0 items-end pl-[5px]">
              {DETAIL_TABS.map((tab) => (
                <button
                  key={tab}
                  type="button"
                  className="h-[27px] border-t-2 border-r-2 border-[#888] bg-[#efefef] pt-1 pr-[6px] pl-[7px] text-base leading-6 first:border-l-2"
                >
                  {tab}
                </button>
              ))}
            </div>
          </div>
        </main>
      </div>
    </div>
  );
};

export default App;
